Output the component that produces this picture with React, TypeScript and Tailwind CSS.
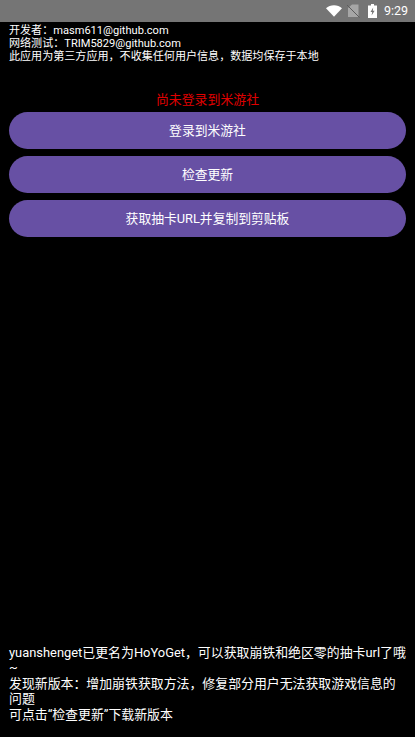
const font = { fontFamily: 'Roboto, "Noto Sans CJK SC", sans-serif' }

function StatusBar() {
  return (
    <div className="h-[22px] bg-[#757575] flex items-center justify-end pr-[7px] text-white">
      <svg width="16" height="12" viewBox="0 0 16 12" className="mr-[5px]">
        <path d="M0 3.2C2.1 1.3 4.9 0.2 8 0.2S13.9 1.3 16 3.2L8 11.8Z" fill="#fff" />
      </svg>
      <svg width="13" height="14" viewBox="0 0 13 14" className="mr-[8px]">
        <path d="M1 13V4L5 0.5H11.5V13Z" fill="#a6a6a6" />
        <path d="M0 1L12.5 13.5" stroke="#5c5c5c" strokeWidth="1" />
      </svg>
      <svg width="9" height="14" viewBox="0 0 9 14" className="mr-[7px]">
        <path d="M3 0H6V1.5H9V14H0V1.5H3Z" fill="#fff" />
        <path d="M5.2 3.5L2.5 8H4.2L3.6 11.5L6.6 6.8H4.8Z" fill="#757575" />
      </svg>
      <span className="text-[12.5px] leading-none">9:29</span>
    </div>
  )
}

function ActionButton({ label }: { label: string }) {
  return (
    <button className="w-full h-[37px] pt-px rounded-full bg-[#6750a4] text-white text-[12.8px] leading-none">
      {label}
    </button>
  )
}

export default function App() {
  return (
    <div className="h-[737px] w-[415px] bg-black flex flex-col overflow-hidden" style={font}>
      <StatusBar />
      <div className="flex-1 flex flex-col px-[9px] text-white">
        <div className="text-[11.07px] leading-[13px] pt-[2px]">
          <p>开发者：masm611@github.com</p>
          <p>网络测试：TRIM5829@github.com</p>
          <p>此应用为第三方应用，不收集任何用户信息，数据均保存于本地</p>
        </div>
        <p className="mt-[29px] text-center text-[12.9px] leading-[15px] text-[#e00000]">尚未登录到米游社</p>
        <div className="mt-[5px] flex flex-col gap-[7px]">
          <ActionButton label="登录到米游社" />
          <ActionButton label="检查更新" />
          <ActionButton label="获取抽卡URL并复制到剪贴板" />
        </div>
        <div className="mt-auto pb-[15px] text-[12.9px] leading-[15.4px]">
          <p>yuanshenget已更名为HoYoGet，可以获取崩铁和绝区零的抽卡url了哦<wbr />~</p>
          <p>发现新版本：增加崩铁获取方法，修复部分用户无法获取游戏信息的问题</p>
          <p>可点击“检查更新”下载新版本</p>
        </div>
      </div>
    </div>
  )
}
